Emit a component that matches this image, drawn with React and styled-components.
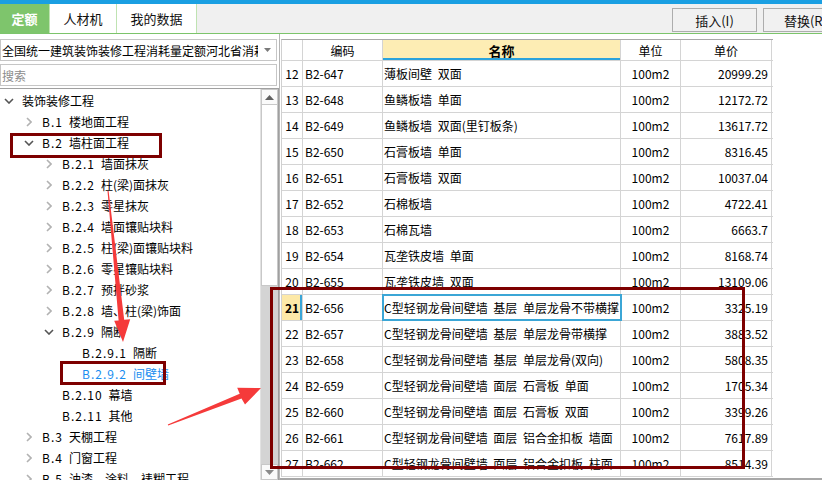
import React from 'react';
import styled, { createGlobalStyle } from 'styled-components';

const GlobalStyle = createGlobalStyle`
  html, body {
    margin: 0;
    padding: 0;
    background: #fff;
  }
  body {
    font-family: "Noto Sans CJK SC", "Liberation Sans", sans-serif;
    font-size: 12px;
    color: #000;
  }
`;

const treeItems = [
  { level: 0, code: '', name: '装饰装修工程', state: 'open' },
  { level: 1, code: 'B.1', name: '楼地面工程', state: 'closed' },
  { level: 1, code: 'B.2', name: '墙柱面工程', state: 'open' },
  { level: 2, code: 'B.2.1', name: '墙面抹灰', state: 'closed' },
  { level: 2, code: 'B.2.2', name: '柱(梁)面抹灰', state: 'closed' },
  { level: 2, code: 'B.2.3', name: '零星抹灰', state: 'closed' },
  { level: 2, code: 'B.2.4', name: '墙面镶贴块料', state: 'closed' },
  { level: 2, code: 'B.2.5', name: '柱(梁)面镶贴块料', state: 'closed' },
  { level: 2, code: 'B.2.6', name: '零星镶贴块料', state: 'closed' },
  { level: 2, code: 'B.2.7', name: '预拌砂浆', state: 'closed' },
  { level: 2, code: 'B.2.8', name: '墙、柱(梁)饰面', state: 'closed' },
  { level: 2, code: 'B.2.9', name: '隔断', state: 'open' },
  { level: 3, code: 'B.2.9.1', name: '隔断', state: 'leaf' },
  { level: 3, code: 'B.2.9.2', name: '间壁墙', state: 'leaf', selected: true },
  { level: 2, code: 'B.2.10', name: '幕墙', state: 'leaf' },
  { level: 2, code: 'B.2.11', name: '其他', state: 'leaf' },
  { level: 1, code: 'B.3', name: '天棚工程', state: 'closed' },
  { level: 1, code: 'B.4', name: '门窗工程', state: 'closed' },
  { level: 1, code: 'B.5', name: '油漆、涂料、裱糊工程', state: 'closed' },
];

const rows = [
  [12, 'B2-647', '薄板间壁 双面', '100m2', '20999.29'],
  [13, 'B2-648', '鱼鳞板墙 单面', '100m2', '12172.72'],
  [14, 'B2-649', '鱼鳞板墙 双面(里钉板条)', '100m2', '13617.72'],
  [15, 'B2-650', '石膏板墙 单面', '100m2', '8316.45'],
  [16, 'B2-651', '石膏板墙 双面', '100m2', '10037.04'],
  [17, 'B2-652', '石棉板墙', '100m2', '4722.41'],
  [18, 'B2-653', '石棉瓦墙', '100m2', '6663.7'],
  [19, 'B2-654', '瓦垄铁皮墙 单面', '100m2', '8168.74'],
  [20, 'B2-655', '瓦垄铁皮墙 双面', '100m2', '13109.06'],
  [21, 'B2-656', 'C型轻钢龙骨间壁墙 基层 单层龙骨不带横撑', '100m2', '3325.19'],
  [22, 'B2-657', 'C型轻钢龙骨间壁墙 基层 单层龙骨带横撑', '100m2', '3883.52'],
  [23, 'B2-658', 'C型轻钢龙骨间壁墙 基层 单层龙骨(双向)', '100m2', '5808.35'],
  [24, 'B2-659', 'C型轻钢龙骨间壁墙 面层 石膏板 单面', '100m2', '1705.34'],
  [25, 'B2-660', 'C型轻钢龙骨间壁墙 面层 石膏板 双面', '100m2', '3399.26'],
  [26, 'B2-661', 'C型轻钢龙骨间壁墙 面层 铝合金扣板 墙面', '100m2', '7617.89'],
  [27, 'B2-662', 'C型轻钢龙骨间壁墙 面层 铝合金扣板 柱面', '100m2', '8514.39'],
];

const Chevron = ({ state }) => {
  if (state === 'open') {
    return (
      <svg width="10" height="6" viewBox="0 0 10 6">
        <polyline points="1,1 5,5 9,1" fill="none" stroke="#555" strokeWidth="1.6" />
      </svg>
    );
  }
  if (state === 'closed') {
    return (
      <svg width="6" height="10" viewBox="0 0 6 10">
        <polyline points="1,1 5,5 1,9" fill="none" stroke="#b2b2b2" strokeWidth="1.6" />
      </svg>
    );
  }
  return null;
};

const App = () => {
  const selectedRow = 21;

  return (
    <>
      <GlobalStyle />
      <Page>
        <TopStrip />
        <TabBar>
          <Tab $w={50} $active>定额</Tab>
          <Tab $w={67}>人材机</Tab>
          <Tab $w={80}>我的数据</Tab>
          <ButtonGroup>
            <ToolButton>插入(I)</ToolButton>
            <ToolButton>替换(R)</ToolButton>
          </ButtonGroup>
        </TabBar>

        <Main>
          <LeftPanel>
            <Select>
              <SelectText>全国统一建筑装饰装修工程消耗量定额河北省消耗量定额</SelectText>
              <SelectArrow>
                <svg width="7" height="4" viewBox="0 0 7 4">
                  <polygon points="0,0 7,0 3.5,4" fill="#7a7a7a" />
                </svg>
              </SelectArrow>
            </Select>
            <Search>搜索</Search>
            <Tree>
              <TreeList>
                {treeItems.map((item, i) => (
                  <TreeRow key={i} $level={item.level} $selected={item.selected}>
                    <ChevronSlot>
                      <Chevron state={item.state} />
                    </ChevronSlot>
                    <TreeLabel>
                      {item.code && <TreeCode>{item.code}</TreeCode>}
                      {item.name}
                    </TreeLabel>
                  </TreeRow>
                ))}
              </TreeList>
              <Scrollbar>
                <ScrollButton>
                  <svg width="9" height="5" viewBox="0 0 9 5">
                    <polygon points="0,5 9,5 4.5,0" fill="#606060" />
                  </svg>
                </ScrollButton>
                <ScrollThumb />
                <ScrollTrack />
                <ScrollButton>
                  <svg width="9" height="5" viewBox="0 0 9 5">
                    <polygon points="0,0 9,0 4.5,5" fill="#8a8a8a" />
                  </svg>
                </ScrollButton>
              </Scrollbar>
            </Tree>
          </LeftPanel>

          <GridPanel>
            <Table>
              <HeaderRow>
                <Cell $align="center" />
                <Cell $align="center">编码</Cell>
                <NameHeader $align="center">名称</NameHeader>
                <Cell $align="center">单位</Cell>
                <Cell $align="center">单价</Cell>
              </HeaderRow>
              {rows.map(([no, code, name, unit, price]) => (
                <Row key={no}>
                  <NumberCell $align="center" $current={no === selectedRow}>
                    {no}
                  </NumberCell>
                  <Cell $align="left">{code}</Cell>
                  <NameCell $align="left" $focused={no === selectedRow}>
                    {name}
                  </NameCell>
                  <Cell $align="center">{unit}</Cell>
                  <Cell $align="right">{price}</Cell>
                </Row>
              ))}
            </Table>
          </GridPanel>
        </Main>

        {/* annotation marks drawn over the screenshot */}
        <Annotations width="822" height="480" viewBox="0 0 822 480">
          <g fill="none" stroke="#7d0000" strokeWidth="3">
            <rect x="11.5" y="134.5" width="149" height="22" />
            <rect x="61.5" y="362.5" width="103" height="21" />
            <rect x="271.5" y="288.5" width="472" height="179" />
          </g>
          <g fill="#f53a3a">
            <polygon points="107.5,191 118.6,320.4 114.2,320.8 123,342 130.2,319.2 124.2,319.8 108.6,191" />
            <polygon points="167.8,424.5 239.7,393.8 237.2,387.8 261,388 245,404.5 241.5,398.4 168.2,425.5" />
          </g>
        </Annotations>
      </Page>
    </>
  );
};

export default App;

const Page = styled.div`
  position: relative;
  width: 822px;
  height: 480px;
  overflow: hidden;
  background: #fff;
  display: flex;
  flex-direction: column;
`;

const TopStrip = styled.div`
  height: 4px;
  flex-shrink: 0;
  background: #1a9fe2;
`;

const TabBar = styled.div`
  height: 29px;
  flex-shrink: 0;
  display: flex;
  align-items: stretch;
  background: #f0f0f0;
  border-bottom: 1px solid #7cc46b;
`;

const Tab = styled.div`
  width: ${({ $w }) => $w}px;
  box-sizing: border-box;
  display: flex;
  align-items: center;
  justify-content: center;
  font-size: 13px;
  background: ${({ $active }) => ($active ? '#7ec56c' : '#fff')};
  color: ${({ $active }) => ($active ? '#fff' : '#111')};
  font-weight: ${({ $active }) => ($active ? 700 : 400)};
  border-right: 1px solid #bfe3b2;
`;

const ButtonGroup = styled.div`
  margin-left: auto;
  margin-right: -26px;
  padding-top: 4px;
  display: flex;
  gap: 6px;
`;

const ToolButton = styled.div`
  width: 85px;
  height: 24px;
  box-sizing: border-box;
  border: 1px solid #adadad;
  background: #f1f1f1;
  display: flex;
  align-items: center;
  justify-content: center;
  font-size: 13px;
  color: #111;
`;

const Main = styled.div`
  flex: 1;
  min-height: 0;
  display: flex;
`;

const LeftPanel = styled.div`
  width: 279px;
  flex-shrink: 0;
  box-sizing: border-box;
  padding-top: 5px;
  display: flex;
  flex-direction: column;
`;

const Select = styled.div`
  height: 22px;
  margin-right: 2px;
  box-sizing: border-box;
  border: 1px solid #c6c6c6;
  display: flex;
  align-items: center;
  padding-left: 1px;
  font-size: 12px;
  white-space: nowrap;
  overflow: hidden;
`;

const SelectText = styled.div`
  flex: 1;
  overflow: hidden;
`;

const SelectArrow = styled.div`
  width: 18px;
  flex-shrink: 0;
  display: flex;
  align-items: center;
  justify-content: center;
`;

const Search = styled.div`
  height: 22px;
  margin-top: 3px;
  margin-right: 2px;
  box-sizing: border-box;
  border: 1px solid #c6c6c6;
  display: flex;
  align-items: center;
  padding-left: 1px;
  font-size: 12px;
  color: #8c8c8c;
`;

const Tree = styled.div`
  flex: 1;
  min-height: 0;
  margin-top: 2px;
  border-top: 1px solid #a0a0a0;
  border-right: 1px solid #a0a0a0;
  display: flex;
  overflow: hidden;
`;

const TreeList = styled.div`
  flex: 1;
  padding-top: 1px;
`;

const TreeRow = styled.div`
  height: 21px;
  display: flex;
  align-items: center;
  padding-left: ${({ $level }) => $level * 20}px;
  color: ${({ $selected }) => ($selected ? '#1b8ef0' : '#000')};
  white-space: nowrap;
`;

const ChevronSlot = styled.div`
  width: 18px;
  flex-shrink: 0;
  display: flex;
  align-items: center;
  justify-content: center;
`;

const TreeLabel = styled.span`
  margin-left: 4px;
  font-size: 12px;
  line-height: 21px;
`;

const TreeCode = styled.span`
  letter-spacing: 1px;
  margin-right: 6px;
`;

const Scrollbar = styled.div`
  width: 17px;
  flex-shrink: 0;
  display: flex;
  flex-direction: column;
  border-left: 1px solid #e2e2e2;
`;

const ScrollButton = styled.div`
  height: 16px;
  flex-shrink: 0;
  box-sizing: border-box;
  border: 1px solid #c8c8c8;
  background: #fafafa;
  display: flex;
  align-items: center;
  justify-content: center;
`;

const ScrollThumb = styled.div`
  height: 181px;
  flex-shrink: 0;
  box-sizing: border-box;
  border: 1px solid #c8c8c8;
  border-top: none;
  background: #fff;
`;

const ScrollTrack = styled.div`
  flex: 1;
  background: #d4d4d4;
`;

const GridPanel = styled.div`
  flex: 1;
  box-sizing: border-box;
  padding-top: 5px;
  padding-left: 1px;
  border-left: 1px solid #b4b4b4;
  border-bottom: 2px solid #a8a8a8;
  overflow: hidden;
`;

const Table = styled.div`
  width: 491px;
  border-top: 1px solid #a8a8a8;
  border-left: 1px solid #d0d0d0;
`;

const columns = '21px 80px 238px 60px 91px';

const HeaderRow = styled.div`
  display: grid;
  grid-template-columns: ${columns};
  height: 21px;
  box-sizing: border-box;
  border-bottom: 1px solid #d4d4d4;
`;

const Row = styled.div`
  display: grid;
  grid-template-columns: ${columns};
  height: 26px;
  box-sizing: border-box;
  border-bottom: 1px solid #d4d4d4;
`;

const Cell = styled.div`
  display: flex;
  align-items: center;
  justify-content: ${({ $align }) =>
    $align === 'center' ? 'center' : $align === 'right' ? 'flex-end' : 'flex-start'};
  padding: 0 ${({ $align }) => ($align === 'right' ? 3 : $align === 'left' ? 2 : 0)}px;
  border-right: 1px solid #d4d4d4;
  font-size: 12px;
  white-space: nowrap;
  overflow: hidden;
  word-spacing: 3px;
`;

const NameHeader = styled(Cell)`
  background: #fdedb4;
  font-weight: 700;
  box-shadow: inset 0 -2px 0 #2aa3dc;
  font-size: 13px;
`;

const NumberCell = styled(Cell)`
  background: ${({ $current }) => ($current ? '#fde9a8' : 'transparent')};
  font-weight: ${({ $current }) => ($current ? 700 : 400)};
  box-shadow: ${({ $current }) => ($current ? 'inset -2px 0 0 #3aa6d8' : 'none')};
`;

const NameCell = styled(Cell)`
  padding-left: 1px;
  outline: ${({ $focused }) => ($focused ? '2px solid #3ba6d6' : 'none')};
  outline-offset: -1px;
`;

const Annotations = styled.svg`
  position: absolute;
  top: 0;
  left: 0;
  pointer-events: none;
`;
